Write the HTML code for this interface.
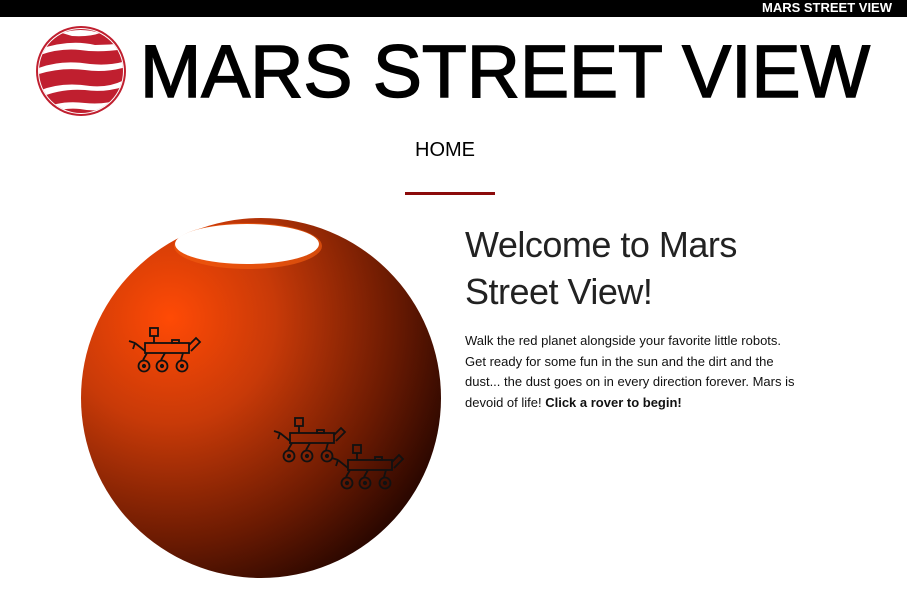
<!DOCTYPE html>
<html><head><meta charset="utf-8"><style>
body{margin:0;width:907px;height:613px;overflow:hidden;background:#fff;font-family:"Liberation Sans",sans-serif;position:relative}
.top{position:absolute;left:0;top:0;width:907px;height:17px;background:#000;color:#fff;font-size:13px;font-weight:bold;line-height:16px;text-align:right}
.top span{margin-right:15px}
.home{position:absolute;left:0;width:890px;text-align:center;top:139px;font-size:20px;color:#000}
.bar{position:absolute;left:405px;top:192px;width:90px;height:3px;background:#8b0b0b}
h1{position:absolute;left:465px;top:221px;margin:0;font-weight:normal;font-size:36px;line-height:47px;color:#222;letter-spacing:-0.5px}
p{position:absolute;left:465px;top:331px;margin:0;width:336px;font-size:13px;line-height:20.7px;color:#111}
</style></head><body>
<div class="top"><span>MARS STREET VIEW</span></div>
<svg style="position:absolute;left:0;top:17px" width="907" height="110">
<defs><clipPath id="c"><circle cx="81" cy="54" r="42"/></clipPath></defs>
<circle cx="81" cy="54" r="45" fill="#c01f2f"/>
<circle cx="81" cy="54" r="43" fill="#fff"/>
<circle cx="81" cy="54" r="42" fill="#c01f2f"/>
<g clip-path="url(#c)" fill="#fff">
<path d="M62 16 Q80 10 100 16 Q90 20 72 19Z"/>
<path d="M40 32 Q70 22 95 28 Q110 28 125 26 L125 32 Q100 36 80 33 Q60 31 40 38Z"/>
<path d="M36 52 Q60 42 90 47 Q110 49 126 44 L126 50 Q105 56 85 53 Q60 50 36 58Z"/>
<path d="M36 75 Q60 64 90 69 Q110 71 126 62 L126 69 Q105 76 85 73 Q60 71 36 82Z"/>
<path d="M42 92 Q60 83 85 86 Q105 88 120 82 L118 88 Q100 96 80 92 Q62 90 48 98Z"/>
</g>
<text x="140" y="80" font-family="Liberation Sans" font-size="74" stroke="#000" stroke-width="1.5" textLength="730" lengthAdjust="spacingAndGlyphs" fill="#000">MARS STREET VIEW</text>
</svg>
<div class="home">HOME</div>
<div class="bar"></div>
<svg style="position:absolute;left:0;top:0" width="460" height="613">
<defs>
<radialGradient id="g" cx="170" cy="318" r="300" gradientUnits="userSpaceOnUse">
<stop offset="0" stop-color="#ff4a05"/><stop offset="0.35" stop-color="#c83a08"/><stop offset="0.75" stop-color="#6a1a02"/><stop offset="1" stop-color="#2a0700"/>
</radialGradient>
<g id="r" fill="none" stroke="#111" stroke-width="1.8">
<rect x="25" y="0" width="8" height="8"/><line x1="29" y1="8" x2="29" y2="15"/>
<rect x="20" y="15" width="44" height="10"/><rect x="47" y="12" width="7" height="3"/>
<path d="M64 17 L71 10 L75 14 L66 23"/>
<path d="M20 23 L10 15 M10 15 L4 13 M10 15 L8 21"/>
<path d="M22 25 L18 32 M40 25 L36 32 M58 25 L56 32"/>
<circle cx="19" cy="38" r="5.5"/><circle cx="37" cy="38" r="5.5"/><circle cx="57" cy="38" r="5.5"/>
<circle cx="19" cy="38" r="1.2" fill="#111"/><circle cx="37" cy="38" r="1.2" fill="#111"/><circle cx="57" cy="38" r="1.2" fill="#111"/>
</g>
</defs>
<circle cx="261" cy="398" r="180" fill="url(#g)"/>
<ellipse cx="248" cy="246" rx="74" ry="23" fill="#f05a10" opacity="0.7"/>
<ellipse cx="247" cy="244" rx="72" ry="20" fill="#fff"/>
<use href="#r" x="125" y="328"/>
<use href="#r" x="270" y="418"/>
<use href="#r" x="328" y="445"/>
</svg>
<h1>Welcome to Mars<br>Street View!</h1>
<p>Walk the red planet alongside your favorite little robots. Get ready for some fun in the sun and the dirt and the dust... the dust goes on in every direction forever. Mars is devoid of life! <b>Click a rover to begin!</b></p>
</body></html>
